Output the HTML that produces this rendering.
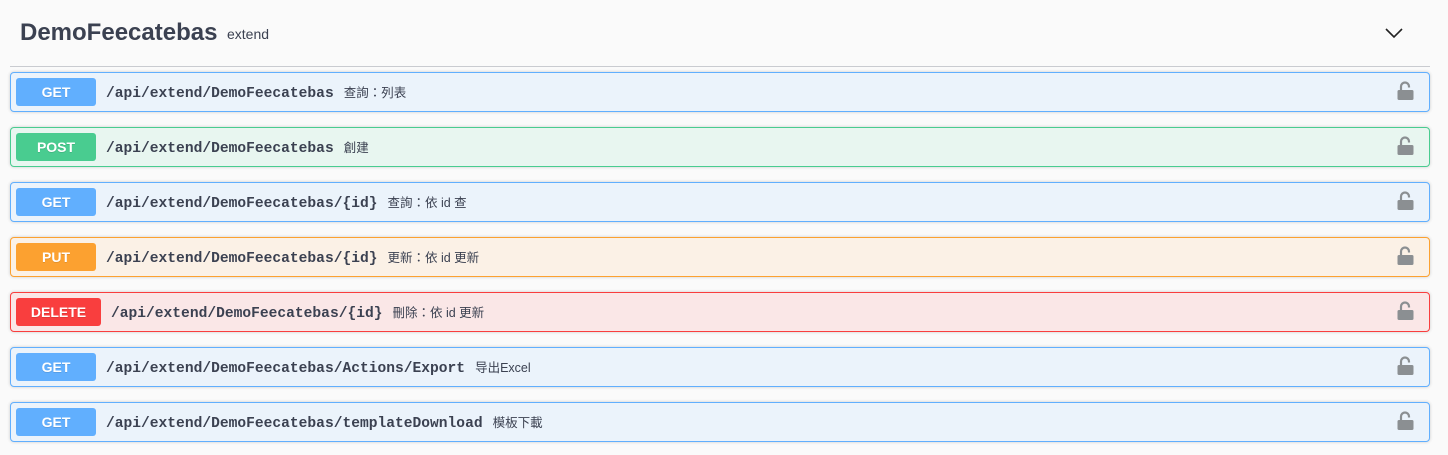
<!DOCTYPE html>
<html><head><meta charset="utf-8">
<style>
*{margin:0;padding:0;box-sizing:border-box}
body{width:1448px;height:455px;background:#fafafa;position:relative;overflow:hidden;font-family:"Liberation Sans","Noto Sans CJK TC",sans-serif;color:#3b4151}
.title{position:absolute;left:20px;top:19px;font-size:24px;font-weight:bold;color:#3b4151}
.sub{position:absolute;left:227px;top:26px;font-size:14px;color:#3b4151}
.hr{position:absolute;left:10px;top:66px;width:1420px;height:1px;background:#c9cbd0}
.chev{position:absolute;left:1384px;top:26px}
.row{position:absolute;left:10px;width:1420px;height:40px;border:1px solid;border-radius:4px;box-shadow:0 0 3px rgba(0,0,0,.19)}
.b{position:absolute;left:5px;top:5px;height:28px;width:80px;border-radius:3px;color:#fff;font-weight:bold;font-size:14px;text-align:center;line-height:29px;text-shadow:0 1px 0 rgba(0,0,0,.1)}
.p{position:absolute;top:1px;line-height:38px;font-family:"Liberation Mono",monospace;font-weight:bold;font-size:14.6px;color:#3b4151;white-space:nowrap}
.d{font-family:"Liberation Sans","Noto Sans CJK TC",sans-serif;font-weight:normal;font-size:12.5px;margin-left:10px;color:#3b4151}
.lock{position:absolute;left:1385px;top:8px}
.get{background:#ebf3fb;border-color:#61affe}.get .b{background:#61affe}
.post{background:#e8f6f0;border-color:#49cc90}.post .b{background:#49cc90}
.put{background:#fbf1e6;border-color:#fca130}.put .b{background:#fca130}
.del{background:#fae7e7;border-color:#f93e3e}.del .b{background:#f93e3e;width:85px}
</style></head><body>
<div class="title">DemoFeecatebas</div>
<div class="sub">extend</div>
<svg class="chev" width="20" height="14" viewBox="0 0 20 14"><path d="M2 3 L10 11 L18 3" fill="none" stroke="#222" stroke-width="1.6"/></svg>
<div class="hr"></div>

<div class="row get" style="top:72px"><div class="b">GET</div><div class="p" style="left:95px">/api/extend/DemoFeecatebas<span class="d">查詢：列表</span></div><svg class="lock" width="20" height="22" viewBox="0 0 20 22"><path d="M5 9 V5.5 A4 4 0 0 1 13 5.5 V6.5" fill="none" stroke="#8b8f92" stroke-width="2.2"/><rect x="1.5" y="9" width="16" height="10" rx="1.5" fill="#8b8f92"/></svg></div>
<div class="row post" style="top:127px"><div class="b">POST</div><div class="p" style="left:95px">/api/extend/DemoFeecatebas<span class="d">創建</span></div><svg class="lock" width="20" height="22" viewBox="0 0 20 22"><path d="M5 9 V5.5 A4 4 0 0 1 13 5.5 V6.5" fill="none" stroke="#8b8f92" stroke-width="2.2"/><rect x="1.5" y="9" width="16" height="10" rx="1.5" fill="#8b8f92"/></svg></div>
<div class="row get" style="top:182px"><div class="b">GET</div><div class="p" style="left:95px">/api/extend/DemoFeecatebas/{id}<span class="d">查詢：依 id 查</span></div><svg class="lock" width="20" height="22" viewBox="0 0 20 22"><path d="M5 9 V5.5 A4 4 0 0 1 13 5.5 V6.5" fill="none" stroke="#8b8f92" stroke-width="2.2"/><rect x="1.5" y="9" width="16" height="10" rx="1.5" fill="#8b8f92"/></svg></div>
<div class="row put" style="top:237px"><div class="b">PUT</div><div class="p" style="left:95px">/api/extend/DemoFeecatebas/{id}<span class="d">更新：依 id 更新</span></div><svg class="lock" width="20" height="22" viewBox="0 0 20 22"><path d="M5 9 V5.5 A4 4 0 0 1 13 5.5 V6.5" fill="none" stroke="#8b8f92" stroke-width="2.2"/><rect x="1.5" y="9" width="16" height="10" rx="1.5" fill="#8b8f92"/></svg></div>
<div class="row del" style="top:292px"><div class="b">DELETE</div><div class="p" style="left:100px">/api/extend/DemoFeecatebas/{id}<span class="d">刪除：依 id 更新</span></div><svg class="lock" width="20" height="22" viewBox="0 0 20 22"><path d="M5 9 V5.5 A4 4 0 0 1 13 5.5 V6.5" fill="none" stroke="#8b8f92" stroke-width="2.2"/><rect x="1.5" y="9" width="16" height="10" rx="1.5" fill="#8b8f92"/></svg></div>
<div class="row get" style="top:347px"><div class="b">GET</div><div class="p" style="left:95px">/api/extend/DemoFeecatebas/Actions/Export<span class="d">导出Excel</span></div><svg class="lock" width="20" height="22" viewBox="0 0 20 22"><path d="M5 9 V5.5 A4 4 0 0 1 13 5.5 V6.5" fill="none" stroke="#8b8f92" stroke-width="2.2"/><rect x="1.5" y="9" width="16" height="10" rx="1.5" fill="#8b8f92"/></svg></div>
<div class="row get" style="top:402px"><div class="b">GET</div><div class="p" style="left:95px">/api/extend/DemoFeecatebas/templateDownload<span class="d">模板下載</span></div><svg class="lock" width="20" height="22" viewBox="0 0 20 22"><path d="M5 9 V5.5 A4 4 0 0 1 13 5.5 V6.5" fill="none" stroke="#8b8f92" stroke-width="2.2"/><rect x="1.5" y="9" width="16" height="10" rx="1.5" fill="#8b8f92"/></svg></div>
</body></html>
